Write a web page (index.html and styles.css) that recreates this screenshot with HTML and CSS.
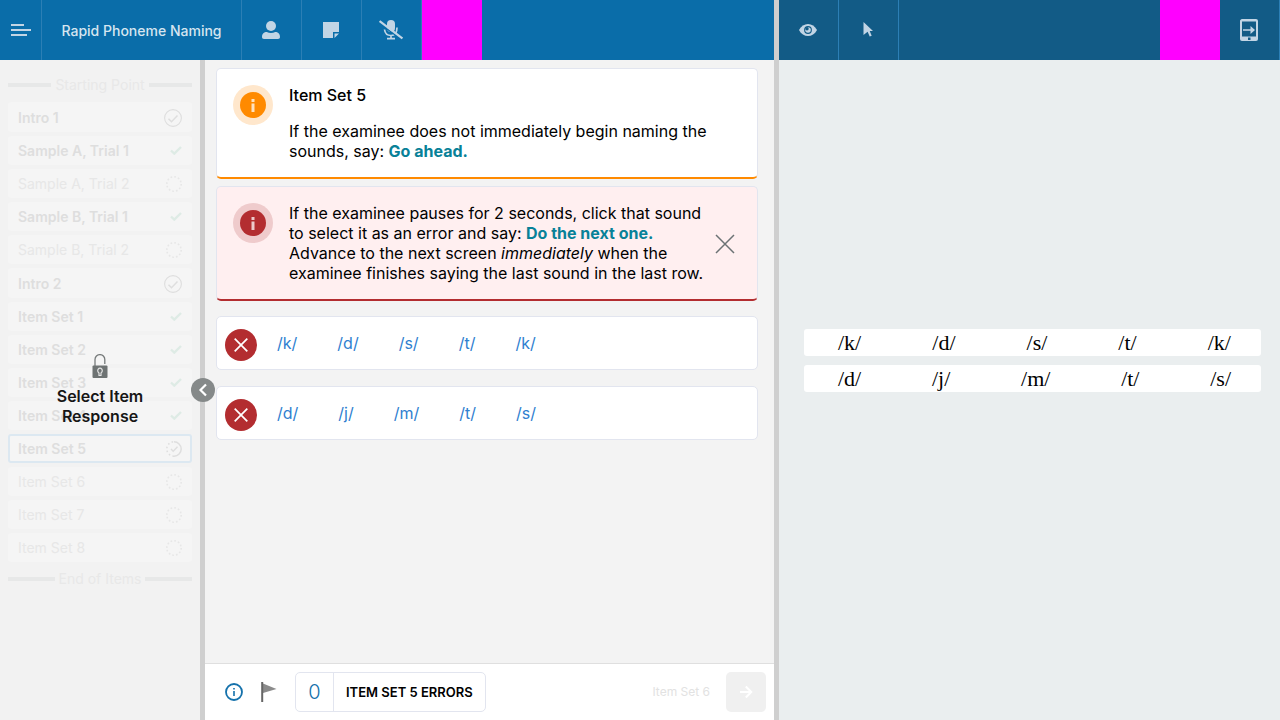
FILE: index.html
```html
<!DOCTYPE html>
<html lang="en">
<head>
<meta charset="utf-8">
<title>Rapid Phoneme Naming</title>
<link rel="stylesheet" href="styles.css">
</head>
<body>
<svg class="sprite" aria-hidden="true">
  <symbol id="check" viewBox="0 0 12 9"><path d="M1 4.5 4.3 7.6 11 1" fill="none" stroke="currentColor" stroke-width="2.4"/></symbol>
  <symbol id="circle-check" viewBox="0 0 18 18"><circle cx="9" cy="9" r="8.4" fill="none" stroke="currentColor" stroke-width="1.1"/><path d="M4.5 9.8 7.5 12.8 13.5 6.5" fill="none" stroke="currentColor" stroke-width="1.5"/></symbol>
  <symbol id="dotted" viewBox="0 0 16 16"><circle cx="8" cy="8" r="7.2" fill="none" stroke="currentColor" stroke-width="1.6" stroke-dasharray="1.7 2.07"/></symbol>
  <symbol id="progress" viewBox="0 0 16 16"><path d="M8 .8a7.2 7.2 0 0 1 0 14.4" fill="none" stroke="currentColor" stroke-width="1.5"/><path d="M8 15.2A7.2 7.2 0 0 1 8 .8" fill="none" stroke="currentColor" stroke-width="1.5" stroke-dasharray="1.6 2.4"/><path d="M5 8 7.2 10.2 11.5 5.8" fill="none" stroke="currentColor" stroke-width="1.4"/></symbol>
  <symbol id="cross" viewBox="0 0 14 14"><path d="M.7.7 13.3 13.3M13.3.7.7 13.3" fill="none" stroke="currentColor" stroke-width="1.7"/></symbol>
</svg>
<div class="app">
  <section class="examiner">
    <header class="bar">
      <button class="menu" aria-label="Menu"><svg width="20" height="12" viewBox="0 0 20 12"><path d="M0 1h13M0 6h20M0 11h16" stroke="currentColor" stroke-width="2"/></svg></button>
      <h1 class="title">Rapid Phoneme Naming</h1>
      <button class="tool" aria-label="Examinee"><svg width="18" height="18" viewBox="0 0 18 18" fill="currentColor"><circle cx="9" cy="5" r="5"/><path d="M0 16c0-3.5 2-5 4.8-5 1.3.6 2.7.9 4.200.9s2.900-.3 4.200-.9c2.800 0 4.800 1.500 4.800 5 0 1.300-.7 2-2 2H2c-1.300 0-2-.7-2-2z"/></svg></button>
      <button class="tool" aria-label="Notes"><svg width="16" height="16" viewBox="0 0 16 16" fill="currentColor"><path d="M0 0h16v10h-6v6H0zM11.500 11.500H16L11.500 16z"/></svg></button>
      <button class="tool" aria-label="Microphone off"><svg width="24" height="20" viewBox="0 0 24 20"><rect x="8" y="0" width="8" height="12" rx="4" fill="currentColor"/><path d="M5.500 9.500c.5 4 3 6 6.500 6s6-2.500 6-8M12 15v3.500M8 18.700h8" fill="none" stroke="currentColor" stroke-width="1.700"/><path d="M0 3.200 24 20.500" stroke="#0a6da9" stroke-width="1.500"/><path d="M.6 1 23.400 18.500" stroke="currentColor" stroke-width="2.200"/></svg></button>
      <div class="mask"></div>
    </header>
    <div class="workspace">
      <nav class="sidebar" aria-label="Items">
        <p class="marker">Starting Point</p>
        <ul class="items">
          <li><button class="item done intro">Intro 1<svg width="18" height="18"><use href="#circle-check"/></svg></button></li>
          <li><button class="item done">Sample A, Trial 1<svg class="tick" width="12" height="9"><use href="#check"/></svg></button></li>
          <li><button class="item">Sample A, Trial 2<svg width="16" height="16"><use href="#dotted"/></svg></button></li>
          <li><button class="item done">Sample B, Trial 1<svg class="tick" width="12" height="9"><use href="#check"/></svg></button></li>
          <li><button class="item">Sample B, Trial 2<svg width="16" height="16"><use href="#dotted"/></svg></button></li>
          <li><button class="item done intro">Intro 2<svg width="18" height="18"><use href="#circle-check"/></svg></button></li>
          <li><button class="item done">Item Set 1<svg class="tick" width="12" height="9"><use href="#check"/></svg></button></li>
          <li><button class="item done">Item Set 2<svg class="tick" width="12" height="9"><use href="#check"/></svg></button></li>
          <li><button class="item done">Item Set 3<svg class="tick" width="12" height="9"><use href="#check"/></svg></button></li>
          <li><button class="item done">Item Set 4<svg class="tick" width="12" height="9"><use href="#check"/></svg></button></li>
          <li><button class="item done current">Item Set 5<svg width="16" height="16"><use href="#progress"/></svg></button></li>
          <li><button class="item">Item Set 6<svg width="16" height="16"><use href="#dotted"/></svg></button></li>
          <li><button class="item">Item Set 7<svg width="16" height="16"><use href="#dotted"/></svg></button></li>
          <li><button class="item">Item Set 8<svg width="16" height="16"><use href="#dotted"/></svg></button></li>
        </ul>
        <p class="marker end">End of Items</p>
        <div class="lock">
          <svg width="16" height="24" viewBox="0 0 16 24"><path d="M3 12V5.500a4.900 4.900 0 0 1 9.800 0V10" fill="none" stroke="#777b7b" stroke-width="1.300"/><rect x=".5" y="11.500" width="15" height="12.500" rx="1" fill="#6e7373"/><path d="M7 21.500v-2.500a2.300 2.600 0 1 1 2 0v2.500z" fill="none" stroke="#e4e4e4" stroke-width="1.200"/></svg>
          <p>Select Item Response</p>
        </div>
      </nav>
      <div class="divider">
        <button class="collapse" aria-label="Collapse item list"><svg width="10" height="14" viewBox="0 0 10 14"><path d="M8 1.500 2.500 7 8 12.500" fill="none" stroke="#fff" stroke-width="2.200"/></svg></button>
      </div>
      <div class="content">
        <main class="main">
          <article class="card prompt">
            <span class="badge"><svg width="26" height="26" viewBox="0 0 26 26"><circle cx="13" cy="13" r="13" fill="currentColor"/><path d="M11.500 7h3v3h-3zM11.500 11.500h3V20h-3z" fill="#fff" opacity=".75"/></svg></span>
            <div class="text">
              <h2>Item Set 5</h2>
              <p>If the examinee does not immediately begin naming the sounds, say: <strong>Go ahead.</strong></p>
            </div>
          </article>
          <article class="card prompt alert">
            <span class="badge"><svg width="26" height="26" viewBox="0 0 26 26"><circle cx="13" cy="13" r="13" fill="currentColor"/><path d="M11.500 7h3v3h-3zM11.500 11.500h3V20h-3z" fill="#fff" opacity=".75"/></svg></span>
            <div class="text">
              <p>If the examinee pauses for 2 seconds, click that sound to select it as an error and say: <strong>Do the next one.</strong><br>Advance to the next screen <em>immediately</em> when the examinee finishes saying the last sound in the last row.</p>
            </div>
            <button class="close" aria-label="Dismiss"><svg width="20" height="20" viewBox="0 0 20 20"><path d="M1 1 19 19M19 1 1 19" stroke="#6b7274" stroke-width="1.500"/></svg></button>
          </article>
          <div class="card row">
            <button class="error" aria-label="Mark row as error"><svg width="14" height="14"><use href="#cross"/></svg></button>
            <div class="sounds"><button>/k/</button><button>/d/</button><button>/s/</button><button>/t/</button><button>/k/</button></div>
          </div>
          <div class="card row">
            <button class="error" aria-label="Mark row as error"><svg width="14" height="14"><use href="#cross"/></svg></button>
            <div class="sounds"><button>/d/</button><button>/j/</button><button>/m/</button><button>/t/</button><button>/s/</button></div>
          </div>
        </main>
        <footer class="footer">
          <button class="plain" aria-label="Information"><svg width="18" height="18" viewBox="0 0 18 18"><circle cx="9" cy="9" r="8" fill="none" stroke="#1471ab" stroke-width="1.800"/><path d="M8.200 5h1.600v1.600H8.200zM8.200 8h1.600v5H8.200z" fill="#1471ab"/></svg></button>
          <button class="plain" aria-label="Flag"><svg width="16" height="20" viewBox="0 0 16 20"><path d="M2 1.500 15.500 7 2 11z" fill="#8b8b8b"/><path d="M1.200 0v20" stroke="#666" stroke-width="2"/></svg></button>
          <div class="counter"><output>0</output><span>ITEM SET 5 ERRORS</span></div>
          <span class="next-label">Item Set 6</span>
          <button class="next" aria-label="Next" disabled><svg width="14" height="14" viewBox="0 0 14 14"><path d="M1 7h11M6.800 1.500 12.300 7l-5.500 5.500" fill="none" stroke="#fff" stroke-width="2"/></svg></button>
        </footer>
      </div>
    </div>
  </section>
  <div class="divider"></div>
  <section class="examinee">
    <header class="bar dark">
      <button class="tool" aria-label="Show"><svg width="18" height="12" viewBox="0 0 18 12"><path d="M0 6C4-2 14-2 18 6 14 14 4 14 0 6z" fill="currentColor"/><circle cx="9" cy="6" r="3.900" fill="#125b86"/><circle cx="9" cy="6" r="2.800" fill="currentColor"/><circle cx="8" cy="4.800" r="1.700" fill="#125b86"/></svg></button>
      <button class="tool" aria-label="Pointer"><svg width="10" height="16" viewBox="0 0 10 16"><path d="M.5 0 10 9H6.700l2 4.700-2 .9-2.100-4.800L.5 13z" fill="currentColor"/></svg></button>
      <div class="mask push"></div>
      <button class="tool" aria-label="Send to device"><svg width="18" height="22" viewBox="0 0 18 22"><path fill-rule="evenodd" d="M2 0h14a2 2 0 0 1 2 2v18a2 2 0 0 1-2 2H2a2 2 0 0 1-2-2V2C0 1 1 0 2 0zm0 2.500v15h14v-15zM8 18.500V21h2.500v-2.500z" fill="currentColor"/><path d="M3 10.200h7.500V7l4.500 4-4.500 4v-3.200H3z" fill="currentColor"/></svg></button>
    </header>
    <div class="stimulus">
      <div class="line"><span>/k/</span><span>/d/</span><span>/s/</span><span>/t/</span><span>/k/</span></div>
      <div class="line"><span>/d/</span><span>/j/</span><span>/m/</span><span>/t/</span><span>/s/</span></div>
    </div>
  </section>
</div>
</body>
</html>
```
FILE: styles.css
```css
* { box-sizing: border-box; }
body { margin: 0; font-family: Inter, "Liberation Sans", sans-serif; font-size: 16px; line-height: 20px; color: #000; background: #f3f3f3; }
h1, h2, p, ul { margin: 0; padding: 0; }
button { margin: 0; padding: 0; border: 0; background: none; font: inherit; color: inherit; }
svg { display: block; }
.sprite { position: absolute; width: 0; height: 0; }
.app { display: flex; height: 100vh; }
.examiner { flex: 774 1 0; min-width: 0; display: flex; flex-direction: column; }
.examinee { flex: 501 1 0; min-width: 0; display: flex; flex-direction: column; background: #eaeeef; }
.divider { flex: none; width: 5px; background: #cfcfcf; position: relative; }

.bar { flex: none; display: flex; height: 60px; background: #0a6da9; color: #c2d5e5; }
.dark { background: #125b86; }
.bar button { display: flex; align-items: center; justify-content: center; border-right: 1px solid #2c7fb5; }
.menu { width: 42px; }
.title { width: 200px; display: flex; align-items: center; justify-content: center; padding-top: 2px; border-right: 1px solid #2c7fb5; font-size: 14px; font-weight: 500; color: #d6e5f0; }
.bar .tool { width: 60px; padding-right: 1px; }
.mask { width: 60px; background: #f0f; }
.push { margin-left: auto; }

.workspace { flex: 1; min-height: 0; display: flex; }
.sidebar { flex: none; width: 200px; padding: 15px 8px; position: relative; background: #f2f2f2; }
.marker { display: flex; align-items: center; gap: 4px; font-size: 14px; color: #e8e8e8; }
.marker::before, .marker::after { content: ""; flex: 1; height: 4px; background: #e7e8e8; }
.end { margin-top: 7px; }
.items { list-style: none; display: flex; flex-direction: column; gap: 4px; margin-top: 7px; }
.item { display: flex; align-items: center; justify-content: space-between; width: 100%; height: 29px; padding: 0 10px; border-radius: 3px; background: #f5f5f5; font-size: 14px; color: #e7e7e7; }
.intro { height: 30px; padding-top: 2px; }
.done { font-weight: 600; color: #dedede; }
.tick { color: #deebe5; }
.current { padding: 0 8px; border: 2px solid #dce8f1; }
.lock { position: absolute; inset: 0; display: flex; flex-direction: column; align-items: center; justify-content: center; gap: 8px; font-weight: 600; text-align: center; color: #161616; }
.lock p { width: 100px; }
.collapse { position: absolute; left: 50%; top: 50%; width: 24px; height: 24px; margin: -12px; border-radius: 50%; background: #858989; display: flex; align-items: center; justify-content: center; z-index: 1; }

.content { flex: 1; min-width: 0; display: flex; flex-direction: column; }
.main { flex: 1; display: flex; flex-direction: column; padding: 8px 16px 8px 11px; }
.card { border: 1px solid #e2e5ef; border-radius: 5px; background: #fff; }
.prompt { display: flex; padding: 16px; border-bottom: 2px solid #ff8a00; }
.prompt + .prompt { margin-top: 7px; }
.badge { flex: none; width: 40px; height: 40px; margin-right: 16px; border-radius: 50%; display: flex; align-items: center; justify-content: center; background: #ffe7cc; color: #ff8a00; }
.text { flex: 1; }
.text h2 { margin-bottom: 16px; font-size: 16px; line-height: 20px; font-weight: 500; }
.text strong { font-weight: 700; color: #088198; }
.alert { background: #ffeff0; border-bottom-color: #b32d30; }
.alert .badge { background: #efcbcc; color: #b32d30; }
.close { flex: none; align-self: center; width: 32px; padding-top: 2px; display: flex; justify-content: center; }
.row { display: flex; align-items: center; height: 54px; margin-top: 16px; padding: 0 8px; gap: 20px; }
.alert + .row { margin-top: 15px; }
.error { width: 32px; height: 32px; margin-top: 3px; border-radius: 50%; background: #b32d30; color: #fff; display: flex; align-items: center; justify-content: center; }
.sounds { display: flex; gap: 40px; color: #2f80d0; }

.footer { flex: none; display: flex; align-items: center; height: 57px; padding: 0 8px 0 20px; border-top: 1px solid #dfdfdf; background: #fff; }
.plain { margin-right: 18px; }
.counter { display: flex; height: 40px; border: 1px solid #e2e5ef; border-radius: 5px; align-items: stretch; line-height: 38px; }
.counter output { width: 38px; border-right: 1px solid #e2e5ef; text-align: center; font-size: 20px; font-weight: 300; color: #1471ab; }
.counter span { padding: 0 12px; font-size: 13px; font-weight: 600; }
.next-label { margin-left: auto; margin-right: 16px; font-size: 12px; color: #e2e2e2; }
.next { width: 40px; height: 40px; border-radius: 5px; background: #f0f0f0; display: flex; align-items: center; justify-content: center; }

.stimulus { flex: 1; display: flex; flex-direction: column; justify-content: center; gap: 9px; padding: 0 19px 60px 25px; font-family: "Liberation Serif", serif; font-size: 22px; line-height: 27px; }
.line { display: flex; justify-content: space-between; padding: 0 30px 0 34px; border-radius: 3px; background: #fff; }
```
